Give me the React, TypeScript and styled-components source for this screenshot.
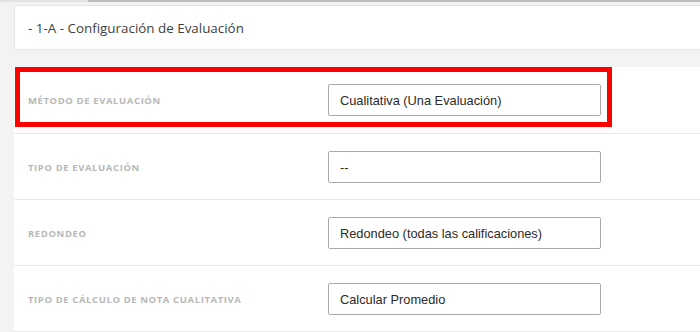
import React from 'react';
import styled, { createGlobalStyle } from 'styled-components';

const GlobalStyle = createGlobalStyle`
  html, body {
    margin: 0;
    padding: 0;
    background: #f3f3f3;
    overflow: hidden;
  }
  * {
    box-sizing: border-box;
  }
`;

const Page = styled.div`
  width: 700px;
  height: 332px;
  overflow: hidden;
  background: #f3f3f3;
  display: flex;
  flex-direction: column;
`;

const TopStrip = styled.div`
  height: 2px;
  flex: none;
  display: flex;
`;

const StripPart = styled.div<{ $dark?: boolean }>`
  height: 100%;
  width: ${(p) => (p.$dark ? 'auto' : '88px')};
  flex: ${(p) => (p.$dark ? '1' : 'none')};
  background: ${(p) => (p.$dark ? '#bdbdbd' : '#e2e2e2')};
`;

const Content = styled.div`
  flex: none;
  padding: 3px 0 0 14px;
  display: flex;
  flex-direction: column;
  gap: 17px;
`;

const HeaderCard = styled.div`
  height: 45px;
  flex: none;
  background: #fff;
  border: 1px solid #e6e6e6;
  border-right: none;
  border-radius: 2px 0 0 2px;
  display: flex;
  align-items: center;
  padding-left: 13px;
`;

const HeaderTitle = styled.span`
  font-family: 'Open Sans', 'DejaVu Sans', sans-serif;
  font-size: 13.4px;
  color: #3c3f44;
  padding-top: 1px;
`;

const Panel = styled.div`
  flex: none;
  background: #fff;
  display: flex;
  flex-direction: column;
`;

const Row = styled.div`
  position: relative;
  flex: none;
  display: flex;
  align-items: center;
  padding: 17px 0 16px 14px;
  border-bottom: 1px solid #e9e9e9;

  &:first-child {
    padding-bottom: 17px;
  }
`;

const Label = styled.div`
  width: 300px;
  font-family: 'Open Sans', 'DejaVu Sans', sans-serif;
  font-size: 9.5px;
  font-weight: 700;
  letter-spacing: 0.6px;
  color: #b8b8b8;
  text-transform: uppercase;
`;

const Field = styled.div`
  width: 273px;
  height: 32px;
  border: 1px solid #a9a9a9;
  border-radius: 2px;
  display: flex;
  align-items: center;
  padding-left: 11px;
  font-family: 'Liberation Sans', Arial, sans-serif;
  font-size: 12.8px;
  color: #2b2b2b;
`;

const Highlight = styled.div`
  position: absolute;
  left: 1px;
  top: 0;
  width: 597px;
  height: 60px;
  border: 5px solid #ff0000;
  pointer-events: none;
`;

interface Setting {
  label: string;
  value: string;
  highlighted?: boolean;
}

const settings: Setting[] = [
  { label: 'Método de evaluación', value: 'Cualitativa (Una Evaluación)', highlighted: true },
  { label: 'Tipo de evaluación', value: '--' },
  { label: 'Redondeo', value: 'Redondeo (todas las calificaciones)' },
  { label: 'Tipo de cálculo de nota cualitativa', value: 'Calcular Promedio' },
];

export default function App() {
  return (
    <>
      <GlobalStyle />
      <Page>
        <TopStrip>
          <StripPart />
          <StripPart $dark />
        </TopStrip>
        <Content>
          <HeaderCard>
            <HeaderTitle>- 1-A - Configuración de Evaluación</HeaderTitle>
          </HeaderCard>
          <Panel>
            {settings.map((s) => (
              <Row key={s.label}>
                <Label>{s.label}</Label>
                <Field>{s.value}</Field>
                {s.highlighted && <Highlight />}
              </Row>
            ))}
          </Panel>
        </Content>
      </Page>
    </>
  );
}
